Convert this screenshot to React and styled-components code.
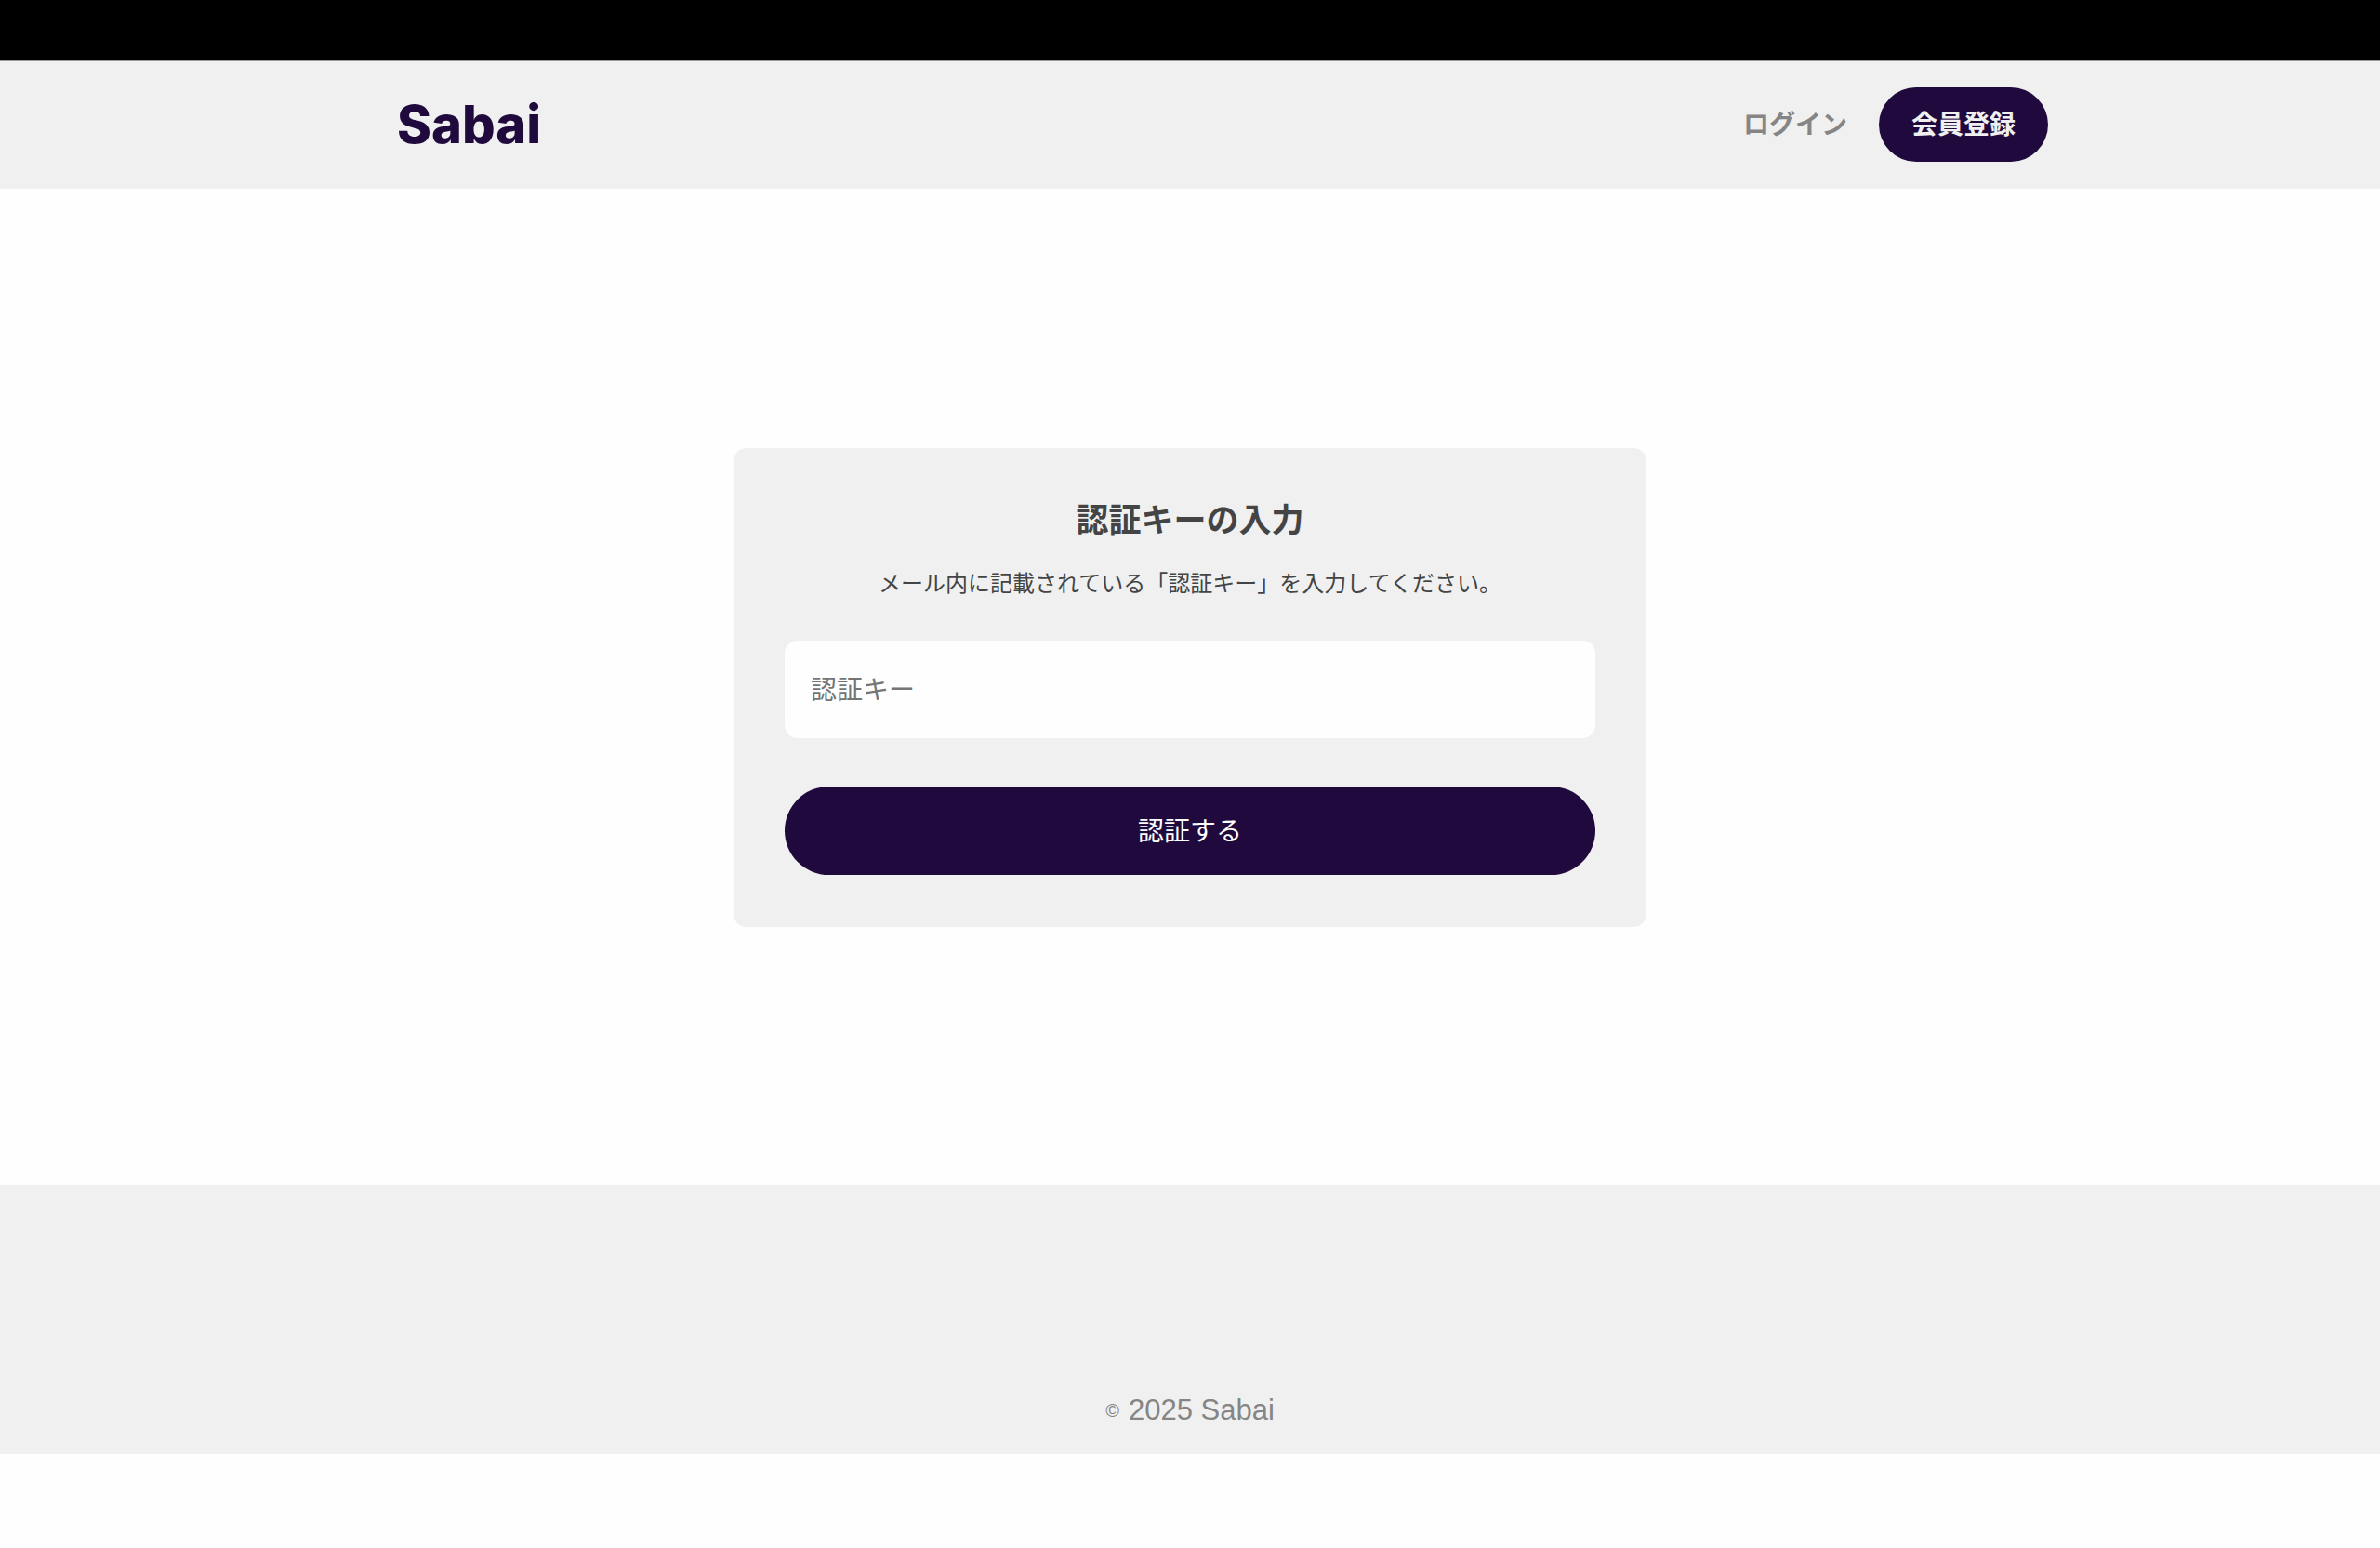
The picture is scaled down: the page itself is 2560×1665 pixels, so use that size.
import React from 'react';
import styled, { createGlobalStyle } from 'styled-components';

const colors = {
  brand: '#200a3d',
  panel: '#f0f0f0',
  page: '#fefefe',
  heading: '#444444',
  muted: '#858585',
  placeholder: '#757575',
};

const GlobalStyle = createGlobalStyle`
  *, *::before, *::after {
    box-sizing: border-box;
  }

  body {
    margin: 0;
    background: ${colors.page};
    color: ${colors.heading};
    font-family: "Noto Sans CJK JP", sans-serif;
  }
`;

const TopStrip = styled.div`
  height: 65px;
  background: #000;
`;

const Header = styled.header`
  padding: 28px 0 29px;
  border-top: 1px solid #999;
  background: ${colors.panel};
`;

const HeaderInner = styled.div`
  display: flex;
  align-items: center;
  justify-content: space-between;
  max-width: 1846px;
  margin: 0 auto;
  padding-left: 70px;
`;

const Logo = styled.a`
  color: ${colors.brand};
  font-family: Inter, sans-serif;
  font-size: 56px;
  font-weight: 800;
  line-height: 80px;
  text-decoration: none;
`;

const Nav = styled.nav`
  display: flex;
  align-items: center;
  gap: 34px;
`;

const NavLink = styled.a`
  color: ${({ $filled }) => ($filled ? colors.panel : colors.muted)};
  background: ${({ $filled }) => ($filled ? colors.brand : 'transparent')};
  padding: ${({ $filled }) => ($filled ? '0 35px 4px' : '0 0 4px')};
  border-radius: 40px;
  font-size: 28px;
  font-weight: 700;
  line-height: 76px;
  text-decoration: none;
`;

const Main = styled.main`
  display: flex;
  justify-content: center;
  padding: 279px 24px 278px;
`;

const Card = styled.form`
  display: flex;
  flex-direction: column;
  width: 100%;
  max-width: 982px;
  padding: 54px 55px 56px;
  border-radius: 14px;
  background: ${colors.panel};
`;

const Title = styled.h1`
  margin: 0 0 30px;
  font-size: 35px;
  font-weight: 700;
  line-height: 42px;
  text-align: center;
`;

const Description = styled.label`
  margin-bottom: 45px;
  font-size: 24px;
  line-height: 36px;
  text-align: center;
`;

const KeyInput = styled.input`
  width: 100%;
  height: 105px;
  margin-bottom: 52px;
  padding: 0 28px 4px;
  border: 0;
  border-radius: 14px;
  background: ${colors.page};
  color: ${colors.heading};
  font-family: inherit;
  font-size: 28px;

  &::placeholder {
    color: ${colors.placeholder};
    opacity: 1;
  }
`;

const SubmitButton = styled.button`
  height: 95px;
  padding: 0 28px 4px;
  border: 0;
  border-radius: 48px;
  background: ${colors.brand};
  color: ${colors.page};
  font-family: inherit;
  font-size: 28px;
  cursor: pointer;
`;

const Footer = styled.footer`
  padding: 222px 24px 27px;
  background: ${colors.panel};
`;

const Copyright = styled.small`
  display: flex;
  align-items: center;
  justify-content: center;
  gap: 10px;
  color: ${colors.muted};
  font-family: "Liberation Sans", sans-serif;
  font-size: 31px;
  line-height: 40px;
`;

const CopyrightMark = styled.span`
  font-size: 20px;
`;

export default function App() {
  return (
    <>
      <GlobalStyle />
      <TopStrip />
      <Header>
        <HeaderInner>
          <Logo href="#">Sabai</Logo>
          <Nav>
            <NavLink href="#login">ログイン</NavLink>
            <NavLink href="#signup" $filled>
              会員登録
            </NavLink>
          </Nav>
        </HeaderInner>
      </Header>
      <Main>
        <Card onSubmit={(event) => event.preventDefault()}>
          <Title>認証キーの入力</Title>
          <Description htmlFor="auth-key">
            メール内に記載されている「認証キー」を入力してください。
          </Description>
          <KeyInput id="auth-key" type="text" placeholder="認証キー" />
          <SubmitButton type="submit">認証する</SubmitButton>
        </Card>
      </Main>
      <Footer>
        <Copyright>
          <CopyrightMark>©</CopyrightMark>
          <span>2025 Sabai</span>
        </Copyright>
      </Footer>
    </>
  );
}
